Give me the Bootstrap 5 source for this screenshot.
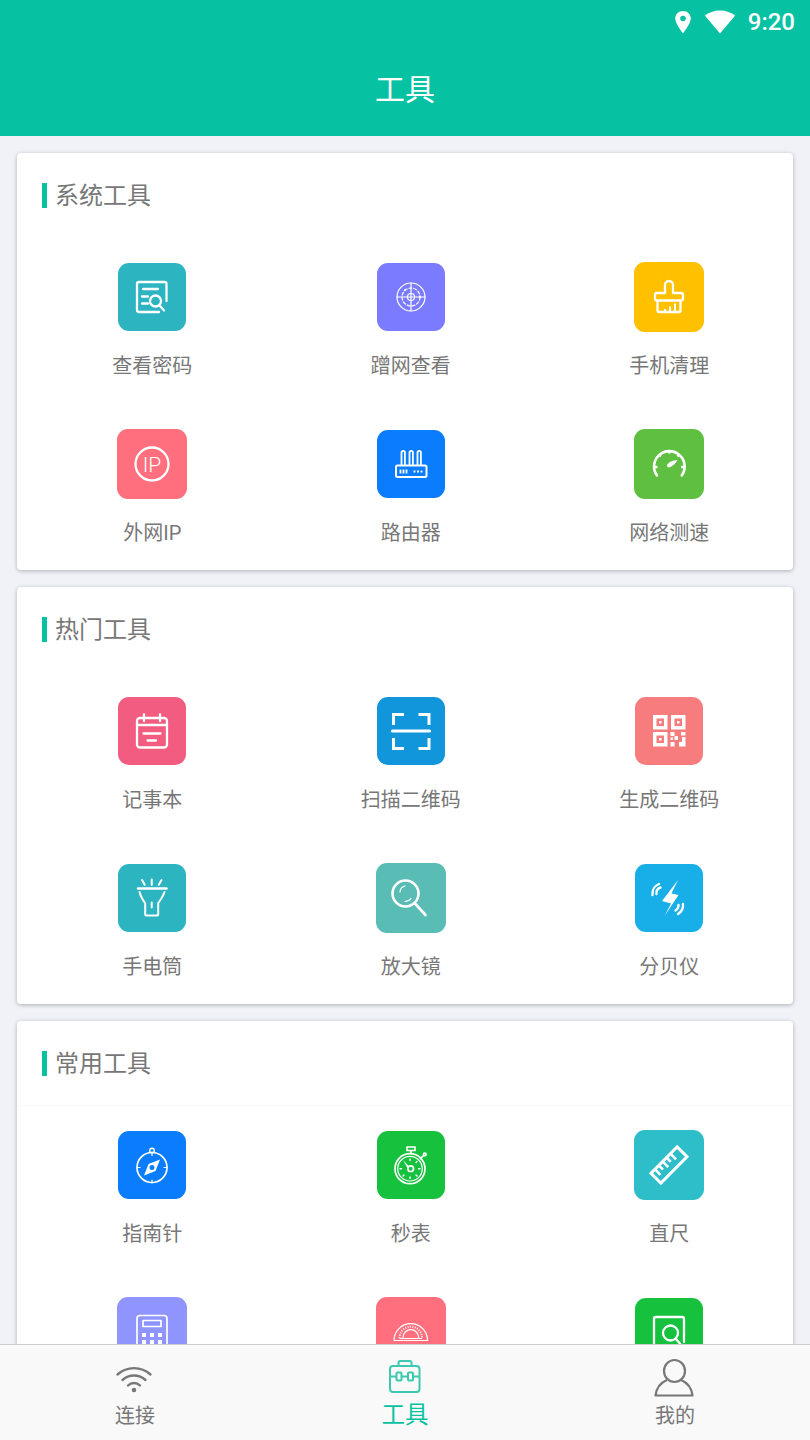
<!DOCTYPE html>
<html lang="zh">
<head>
<meta charset="utf-8">
<title>工具</title>
<link href="https://cdn.jsdelivr.net/npm/bootstrap@5.3.0/dist/css/bootstrap.min.css" rel="stylesheet">
<style>
html,body{margin:0;height:1440px;overflow:hidden;background:#f0f2f7;font-family:Roboto,"Noto Sans CJK SC",sans-serif;}
.app-frame{height:1440px;}
.app-head{height:136px;background:#06c2a2;color:#fff;flex:none;}
.status-row{height:44px;padding-right:15px;gap:12px;}
.status-time{font-size:24px;font-weight:500;line-height:44px;}
.head-title{font-size:30px;line-height:40px;margin-top:26px;text-align:center;font-weight:400;}
.scroll-zone{flex:1 1 0;overflow:hidden;padding:17px 17px 0;min-height:0;}
.tool-panel{border:0;border-radius:4px;box-shadow:0 1px 4px rgba(0,0,0,.28);margin-bottom:17px;}
.panel-head{height:88px;padding:30px 0 0 25px;}
.panel-head.ruled{position:relative;}
.panel-head.ruled::after{content:"";position:absolute;left:0;right:0;top:84px;height:1px;background:#f8f8f8;}
.panel-bar{width:5px;height:25px;background:#06c2a2;margin-right:8px;}
.panel-name{font-size:24px;line-height:27px;color:#777;}
.tool-grid{display:grid;grid-template-columns:repeat(3,258.5px);row-gap:5px;padding-left:6px;}
.tool-cell{height:162px;padding-top:21px;display:flex;flex-direction:column;align-items:center;}
.tile-box{width:70px;height:70px;display:flex;align-items:center;justify-content:center;flex:none;}
.tile{width:68px;height:68px;border-radius:11px;display:block;}
.tile.big{width:70px;height:70px;}
.tool-label{margin-top:19px;font-size:20px;line-height:30px;color:#777;}
.ln{fill:none;stroke:#fff;stroke-width:2.300;stroke-linecap:round;stroke-linejoin:round;}
.thin{fill:none;stroke:#fff;stroke-width:1.200;stroke-linecap:round;stroke-linejoin:round;}
.mid{fill:none;stroke:#fff;stroke-width:1.700;stroke-linecap:round;stroke-linejoin:round;}
.solid{fill:#fff;}
.c-teal{background:#2cb5c0}.c-purple{background:#7b7bff}.c-yellow{background:#ffc000}.c-red{background:#ff6f7d}
.c-blue{background:#0a7dff}.c-lime{background:#5fbf41}.c-pink{background:#f25c80}.c-azure{background:#1296db}
.c-salmon{background:#f67c7e}.c-sea{background:#5abdb5}.c-sky{background:#18aee8}.c-green{background:#16c13e}
.c-cyan{background:#2ebeca}.c-lav{background:#8f94ff}
.tab-strip{height:96px;flex:none;background:#f9f9f9;border-top:1px solid #ccc;}
.tab-item{width:270px;height:95px;position:relative;text-align:center;color:#777;font-size:20px;}
.tab-item.on{color:#06c2a2;font-size:23.500px;}
.tab-text{position:absolute;left:0;right:0;top:56px;line-height:30px;}
.tab-item.on .tab-text{top:55px;}
.tab-icon{position:absolute;left:0;top:0;width:270px;height:60px;}
</style>
</head>
<body>
<div class="app-frame d-flex flex-column">
  <header class="app-head">
    <div class="status-row d-flex justify-content-end align-items-center">
      <svg width="18" height="24" viewBox="0 0 18 24"><path class="solid" fill-rule="evenodd" d="M9 1C4.600 1 1.200 4.400 1.200 8.600 1.200 13.600 9 23.500 9 23.500S16.800 13.600 16.800 8.600C16.800 4.400 13.400 1 9 1zm0 10.300a2.800 2.800 0 1 1 0-5.600 2.800 2.800 0 0 1 0 5.600z"/></svg>
      <svg width="32" height="24" viewBox="0 0 32 24"><path class="solid" d="M16 23.500 .8 5.600C4.800 2.400 10 .4 16 .4s11.200 2 15.200 5.200z"/></svg>
      <span class="status-time">9:20</span>
    </div>
    <div class="head-title">工具</div>
  </header>

  <main class="scroll-zone">
    <section class="card tool-panel">
      <div class="panel-head d-flex align-items-start"><span class="panel-bar"></span><span class="panel-name">系统工具</span></div>
      <div class="tool-grid">
        <div class="tool-cell"><div class="tile-box"><svg class="tile c-teal" viewBox="0 0 68 68"><path class="ln" d="M48.500 38V21a2 2 0 0 0-2-2H21a2 2 0 0 0-2 2v26a2 2 0 0 0 2 2h20M25 26h15M24 33.500h6M24 40.500h6"/><circle class="ln" cx="37.500" cy="38" r="5.500"/><path class="ln" d="m41.500 42.500 4.500 5"/></svg></div><div class="tool-label">查看密码</div></div>
        <div class="tool-cell"><div class="tile-box"><svg class="tile c-purple" viewBox="0 0 68 68"><circle class="thin" cx="34" cy="34" r="14"/><circle class="thin" cx="34" cy="34" r="9" stroke-dasharray="3 2"/><circle class="thin" cx="34" cy="34" r="3.500"/><path class="thin" d="M20 34h28M34 20v28"/><circle class="solid" cx="28" cy="27" r="1"/><circle class="solid" cx="43" cy="34" r="1.200"/></svg></div><div class="tool-label">蹭网查看</div></div>
        <div class="tool-cell"><div class="tile-box"><svg class="tile big c-yellow" viewBox="0 0 70 70"><path class="ln" d="M31 31V23a4 4 0 0 1 8 0v8h8a2 2 0 0 1 2 2v3.500a2 2 0 0 1-2 2H23a2 2 0 0 1-2-2V33a2 2 0 0 1 2-2z"/><path class="ln" d="M23.500 39v10a1 1 0 0 0 1 1h21a1 1 0 0 0 1-1V39"/><path class="ln" style="stroke-width:2;stroke-linecap:butt" d="M31 49.500v-2.500M36 49.500v-5M41 49.500v-8"/></svg></div><div class="tool-label">手机清理</div></div>
        <div class="tool-cell"><div class="tile-box"><svg class="tile big c-red" viewBox="0 0 70 70"><circle class="ln" cx="35" cy="35" r="16.500"/><text x="35" y="42.500" text-anchor="middle" fill="#fff" font-family="Roboto" font-weight="300" font-size="21">IP</text></svg></div><div class="tool-label">外网IP</div></div>
        <div class="tool-cell"><div class="tile-box"><svg class="tile c-blue" viewBox="0 0 68 68"><rect class="ln" style="stroke-width:2" x="19" y="35.500" width="30.500" height="11.500" rx="1.500"/><path class="ln" style="stroke-width:1.800" d="M24.500 35V22.500a1.700 1.700 0 0 1 3.400 0V35M32.500 35V22.500a1.700 1.700 0 0 1 3.400 0V35M40.500 35V22.500a1.700 1.700 0 0 1 3.400 0V35"/><path class="ln" style="stroke-width:1.800;stroke-linecap:butt" d="M23.500 39.500v4M26.500 39.500v4M29.500 39.500v4M36.500 41.500h2M40 41.500h2M43.500 41.500h2"/></svg></div><div class="tool-label">路由器</div></div>
        <div class="tool-cell"><div class="tile-box"><svg class="tile big c-lime" viewBox="0 0 70 70"><path class="ln" style="stroke-width:2.600" d="M23 46.500a15.300 15.300 0 1 1 24.700 0"/><path class="ln" style="stroke-width:2.400;stroke-linecap:butt" d="M35.300 21v3.500M25 25.500l2 2M45.500 25.500l-2 2M20.500 38h3M50 38h-3"/><path class="solid" d="M43.500 31c-4 .2-9 2-10.300 4.800-.7 1.800.9 3.100 2.600 2.500C39 37 42 34 43.500 31z"/></svg></div><div class="tool-label">网络测速</div></div>
      </div>
    </section>

    <section class="card tool-panel">
      <div class="panel-head d-flex align-items-start"><span class="panel-bar"></span><span class="panel-name">热门工具</span></div>
      <div class="tool-grid">
        <div class="tool-cell"><div class="tile-box"><svg class="tile c-pink" viewBox="0 0 68 68"><rect class="ln" x="19" y="21" width="30" height="29.500" rx="3"/><path class="ln" d="M19 28h30M26 17.500V24M42 17.500V24M25.500 36.500h17M29.500 43.500h8.500"/></svg></div><div class="tool-label">记事本</div></div>
        <div class="tool-cell"><div class="tile-box"><svg class="tile c-azure" viewBox="0 0 68 68"><path class="ln" style="stroke-width:3;stroke-linecap:butt;stroke-linejoin:miter" d="M27 17.500H16.500v10.500M41.500 17.500H52v10.500M16.500 41v10.500H27M52 41v10.500H41.500"/><path class="ln" style="stroke-width:3.200" d="M15.500 34h37"/></svg></div><div class="tool-label">扫描二维码</div></div>
        <div class="tool-cell"><div class="tile-box"><svg class="tile c-salmon" viewBox="0 0 68 68"><path class="solid" fill-rule="evenodd" d="M18 18h14.500v14.500H18zm3.500 3.500v7.500h7.500v-7.500zM36 18h14.500v14.500H36zm3.500 3.500v7.500h7.500v-7.500zM18 35h14.500v14.500H18zm3.500 3.500v7.500h7.500v-7.500zM24 24h2.500v2.500H24zM42 24h2.500v2.500H42zM24 41h2.500v2.500H24zM35.500 35h4v4h-4zM39.500 39h3.500v4h-3.500zM46 35h4.500v3.500H46zM35.500 45h4v4.500h-4zM44 45h6.500v4.500H44zM47 40h3.500v5H47zM35.500 40.500h2.500v2.500h-2.500z"/></svg></div><div class="tool-label">生成二维码</div></div>
        <div class="tool-cell"><div class="tile-box"><svg class="tile c-teal" viewBox="0 0 68 68"><path class="ln" style="stroke-width:2.500" d="M20 24.500h28.500"/><path class="ln" style="stroke-width:2" d="M21.500 28c0 0 1 4.500 5.700 11.300V50.500a1 1 0 0 0 1 1h11a1 1 0 0 0 1-1V39.300C44.900 32.500 46.500 28 46.500 28M33.700 38.500v5M33.700 15.500v5.500M24 16l2.700 4.700M43.500 16l-2.700 4.700"/></svg></div><div class="tool-label">手电筒</div></div>
        <div class="tool-cell"><div class="tile-box"><svg class="tile big c-sea" viewBox="0 0 70 70"><circle class="ln" style="stroke-width:2.600" cx="29.500" cy="30.500" r="13"/><path class="ln" style="stroke-width:2.600" d="m38.500 40 11 12"/><path class="thin" d="M24 29a6.500 6.500 0 0 1 5-6M29 38.500a7.500 7.500 0 0 0 6-3"/></svg></div><div class="tool-label">放大镜</div></div>
        <div class="tool-cell"><div class="tile-box"><svg class="tile c-sky" viewBox="0 0 68 68"><path class="solid" d="M43 16 27 37l9 2.500L29.500 52 43.500 31l-7-1.500z"/><path class="ln" style="stroke-width:2.400" d="M21.500 30a6 6 0 0 1 4-6.500M17.500 31a10.500 10.500 0 0 1 6.500-11M43.500 41a6 6 0 0 1-3 5.500M48 40a10.500 10.500 0 0 1-5 10"/></svg></div><div class="tool-label">分贝仪</div></div>
      </div>
    </section>

    <section class="card tool-panel">
      <div class="panel-head ruled d-flex align-items-start"><span class="panel-bar"></span><span class="panel-name">常用工具</span></div>
      <div class="tool-grid">
        <div class="tool-cell"><div class="tile-box"><svg class="tile c-blue" viewBox="0 0 68 68"><circle class="mid" cx="34" cy="36.500" r="15"/><circle class="mid" style="stroke-width:1.400" cx="34" cy="19.500" r="2.300"/><path class="thin" d="M34 21.500v3M34 49v3M19 36.500h3M46 36.500h3"/><path class="solid" fill-rule="evenodd" d="m42 28.500-4.500 11.500L26 44.500l4.500-11.500zm-8 5.500a2.500 2.500 0 1 0 0 5 2.500 2.500 0 0 0 0-5z"/></svg></div><div class="tool-label">指南针</div></div>
        <div class="tool-cell"><div class="tile-box"><svg class="tile c-green" viewBox="0 0 68 68"><circle class="mid" cx="33" cy="37.700" r="15"/><circle class="thin" cx="33" cy="37.700" r="12.300"/><circle class="mid" cx="33.700" cy="37.700" r="2.800"/><path class="mid" d="M30 16h8v3.500h-8zM34 19.500V22.500M43.500 27.500l3-3"/><circle class="mid" cx="47.800" cy="23.500" r="1.300"/><path class="solid" d="m26 29 6 6.500-1.500 1.500z"/><path class="mid" style="stroke-width:1.400" d="M33 28v1.500M33 46v1.500M23 37.700h1.500M41.500 37.700H43M40 30.500l-1 1M26 45l1-1M40 45l-1-1"/></svg></div><div class="tool-label">秒表</div></div>
        <div class="tool-cell"><div class="tile-box"><svg class="tile big c-cyan" viewBox="0 0 70 70"><g transform="rotate(-45 35 35)"><rect x="16.500" y="28" width="37" height="14" fill="none" stroke="#fff" stroke-width="3"/><path d="M22 29v7M27.500 29v5M33 29v7M38.500 29v5M44 29v7" stroke="#fff" stroke-width="2.600"/></g></svg></div><div class="tool-label">直尺</div></div>
        <div class="tool-cell"><div class="tile-box"><svg class="tile big c-lav" viewBox="0 0 70 70"><rect class="mid" x="20" y="18.500" width="30" height="46" rx="3"/><rect class="mid" x="26" y="23.500" width="18" height="6"/><path d="M25 36h4v4h-4zM33 36h4v4h-4zM41 36h4v4h-4zM25 43h4v4h-4zM33 43h4v4h-4zM41 43h4v4h-4z" class="solid"/></svg></div></div>
        <div class="tool-cell"><div class="tile-box"><svg class="tile big c-red" viewBox="0 0 70 70"><path class="thin" d="M18 43.500a16.800 16.800 0 0 1 33.600 0z"/><path class="thin" style="stroke-width:2;stroke-linecap:butt" stroke-dasharray="1 1.400" d="M23.500 41a11.300 11.300 0 0 1 22.600 0"/><path class="thin" d="M27 40.500a7.800 7.800 0 0 1 15.600 0M24 41.500h21.500"/></svg></div></div>
        <div class="tool-cell"><div class="tile-box"><svg class="tile c-green" viewBox="0 0 68 68"><path class="ln" d="M49 44V21a2 2 0 0 0-2-2H21a2 2 0 0 0-2 2v26a2 2 0 0 0 2 2h23"/><circle class="ln" cx="35.500" cy="35" r="7.500"/><path class="ln" d="m41 41 6 7"/></svg></div></div>
      </div>
    </section>
  </main>

  <nav class="tab-strip d-flex">
    <div class="tab-item"><svg class="tab-icon" viewBox="0 0 270 60"><g fill="none" stroke="#777" stroke-width="2.400" stroke-linecap="round"><path d="M117.500 29.500a24.500 24.500 0 0 1 33 0M122.500 35a17 17 0 0 1 23 0M128 40.500a8.500 8.500 0 0 1 12 0"/></g><circle cx="134" cy="45" r="2.300" fill="#777"/></svg><div class="tab-text">连接</div></div>
    <div class="tab-item on"><svg class="tab-icon" viewBox="0 0 270 60"><g fill="none" stroke="#3cc9b0" stroke-width="2" stroke-linejoin="round"><rect x="120" y="21" width="29.500" height="26" rx="3"/><path d="M128.500 21v-3a2 2 0 0 1 2-2h9a2 2 0 0 1 2 2v3M120 31.500h6.500M143 31.500h6.500"/><rect x="126.500" y="27.500" width="5" height="8" rx="1"/><rect x="138" y="27.500" width="5" height="8" rx="1"/><path d="M131.500 31.500h6.500"/></g></svg><div class="tab-text">工具</div></div>
    <div class="tab-item"><svg class="tab-icon" viewBox="0 0 270 60"><g fill="none" stroke="#777" stroke-width="2.200" stroke-linejoin="round"><ellipse cx="134.500" cy="26" rx="10.500" ry="11"/><path d="M127 35c-6 2.500-10.500 7-11.500 15.500h37c-1-8.500-5.500-13-11.500-15.500"/></g></svg><div class="tab-text">我的</div></div>
  </nav>
</div>
<script src="https://cdn.jsdelivr.net/npm/bootstrap@5.3.0/dist/js/bootstrap.bundle.min.js"></script>
</body>
</html>
